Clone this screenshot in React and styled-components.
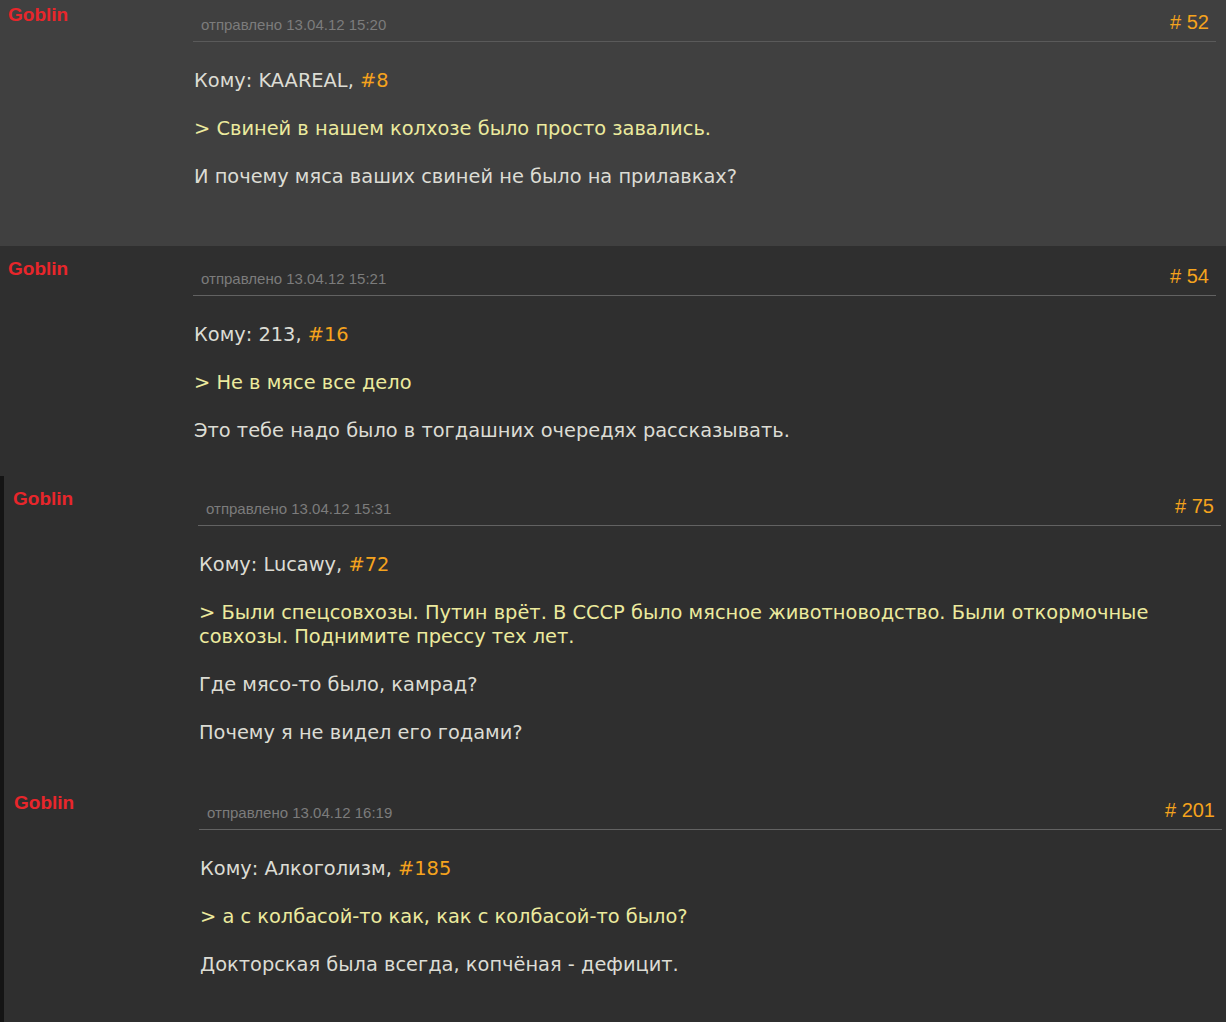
import React from "react";
import { styled, createGlobalStyle } from "styled-components";

const comments = [
  {
    id: 52,
    time: "13.04.12 15:20",
    to: "KAAREAL",
    ref: 8,
    quote: ["Свиней в нашем колхозе было просто завались."],
    text: ["И почему мяса ваших свиней не было на прилавках?"],
    tone: "light",
    indent: 0,
    tail: 33,
  },
  {
    id: 54,
    time: "13.04.12 15:21",
    to: "213",
    ref: 16,
    quote: ["Не в мясе все дело"],
    text: ["Это тебе надо было в тогдашних очередях рассказывать."],
    tone: "dark",
    indent: 0,
    tail: 9,
  },
  {
    id: 75,
    time: "13.04.12 15:31",
    to: "Lucawy",
    ref: 72,
    quote: [
      "Были спецсовхозы. Путин врёт. В СССР было мясное животноводство. Были откормочные совхозы. Поднимите прессу тех лет.",
    ],
    text: ["Где мясо-то было, камрад?", "Почему я не видел его годами?"],
    tone: "dark",
    indent: 5,
    tail: 11,
  },
  {
    id: 201,
    time: "13.04.12 16:19",
    to: "Алкоголизм",
    ref: 185,
    quote: ["а с колбасой-то как, как с колбасой-то было?"],
    text: ["Докторская была всегда, копчёная - дефицит."],
    tone: "dark",
    indent: 6,
    tail: 40,
  },
];

export default function App() {
  return (
    <>
      <GlobalStyle />
      <Page>
        {comments.map((c) => (
          <Comment key={c.id} $tone={c.tone} $indent={c.indent}>
            <Row>
              <Author>Goblin</Author>
              <Content $tail={c.tail}>
                <Header $tone={c.tone}>
                  <Sent>отправлено {c.time}</Sent>
                  <Number># {c.id}</Number>
                </Header>
                <Body>
                  <Para>
                    Кому: {c.to}, <Ref>#{c.ref}</Ref>
                  </Para>
                  {c.quote.map((q) => (
                    <Quote key={q}>&gt; {q}</Quote>
                  ))}
                  {c.text.map((t) => (
                    <Para key={t}>{t}</Para>
                  ))}
                </Body>
              </Content>
            </Row>
          </Comment>
        ))}
      </Page>
    </>
  );
}

const GlobalStyle = createGlobalStyle`
  html, body {
    margin: 0;
    padding: 0;
    background: #2f2f2f;
  }
  body {
    width: 1226px;
    height: 1022px;
    overflow: hidden;
  }
`;

const Page = styled.div`
  margin-top: -8px;
  width: 1226px;
  overflow: hidden;
`;

const Comment = styled.div`
  background: ${(p) => (p.$tone === "light" ? "#404040" : "#2f2f2f")};
  border-left: ${(p) => (p.$indent ? "4px solid #141414" : "none")};
  padding-left: ${(p) => (p.$indent ? p.$indent - 4 : 0)}px;
  width: 1300px;
`;

const Row = styled.div`
  display: grid;
  grid-template-columns: 193px 1023px;
`;

const Author = styled.div`
  padding: 11px 0 0 8px;
  font-family: "Liberation Sans", Arial, sans-serif;
  font-weight: bold;
  font-size: 19px;
  color: #e8262b;
  line-height: 24px;
`;

const Content = styled.div`
  padding-top: 19px;
  padding-bottom: ${(p) => p.$tail}px;
`;

const Header = styled.div`
  display: flex;
  justify-content: space-between;
  align-items: flex-end;
  border-bottom: 1px solid ${(p) => (p.$tone === "light" ? "#5a5a5a" : "#626262")};
  padding: 0 7px 8px 8px;
  font-family: "Liberation Sans", Arial, sans-serif;
`;

const Sent = styled.span`
  font-size: 15px;
  color: #7c7c7c;
  line-height: 16px;
`;

const Number = styled.span`
  font-size: 20px;
  color: #f5a31d;
  line-height: 22px;
`;

const Body = styled.div`
  padding: 27px 0 0 1px;
  font-family: "DejaVu Sans", Verdana, sans-serif;
  font-size: 19.4px;
  line-height: 24px;
`;

const Para = styled.p`
  margin: 0 0 24px;
  color: #dcdcd4;
`;

const Quote = styled(Para)`
  color: #ecea9e;
`;

const Ref = styled.span`
  color: #f5a31d;
`;
